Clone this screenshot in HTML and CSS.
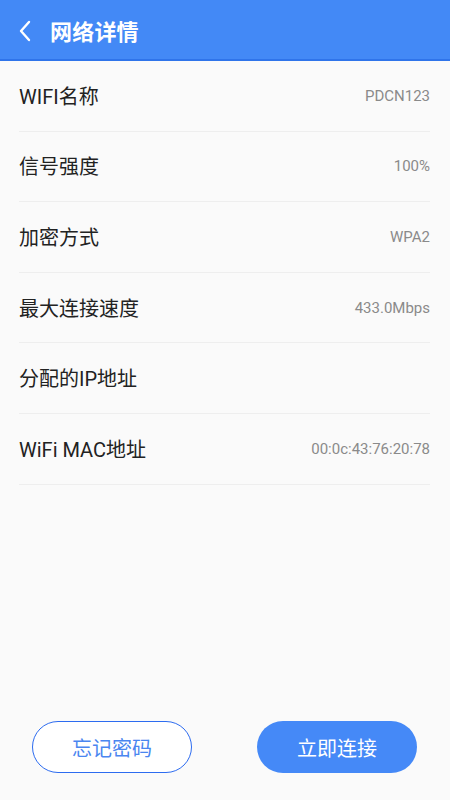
FILE: index.html
```html
<!DOCTYPE html>
<html lang="zh-CN">
<head>
    <meta charset="UTF-8">
    <title>网络详情</title>
    <link rel="stylesheet" href="styles.css">
</head>
<body>
    <div class="pagina">
        <div class="topo">
            <svg class="voltar" width="14" height="24" viewBox="0 0 14 24">
                <path d="M11 3 L3 12 L11 21" fill="none" stroke="#fff" stroke-width="2.4" stroke-linecap="round" stroke-linejoin="round"/>
            </svg>
            <h1>网络详情</h1>
        </div>

        <div class="lista">
            <div class="linha"><span class="nome">WIFI名称</span><span class="valor">PDCN123</span></div>
            <div class="linha"><span class="nome">信号强度</span><span class="valor">100%</span></div>
            <div class="linha"><span class="nome">加密方式</span><span class="valor">WPA2</span></div>
            <div class="linha"><span class="nome">最大连接速度</span><span class="valor">433.0Mbps</span></div>
            <div class="linha"><span class="nome">分配的IP地址</span><span class="valor"></span></div>
            <div class="linha"><span class="nome">WiFi MAC地址</span><span class="valor">00:0c:43:76:20:78</span></div>
        </div>

        <div class="botoes">
            <button class="btn contorno">忘记密码</button>
            <button class="btn cheio">立即连接</button>
        </div>
    </div>
</body>
</html>
```

FILE: styles.css
```css
body {
    margin: 0;
    padding: 0;
    background-color: #fafafa;
    font-family: Roboto, "Noto Sans CJK SC", sans-serif;
}
.pagina {
    height: 800px;
    display: flex;
    flex-direction: column;
}
.topo {
    height: 59px;
    background-color: #4389f6;
    border-bottom: 2px solid #2f74ea;
    display: flex;
    align-items: center;
    padding-left: 18px;
}
.voltar {
    margin-right: 18px;
    margin-top: 2px;
}
.topo h1 {
    margin: 0;
    color: #fff;
    font-size: 22px;
    font-weight: bold;
    letter-spacing: 0.2px;
}
.lista {
    padding: 0 20px 0 19px;
    flex: 1;
}
.linha {
    height: 69.6px;
    border-bottom: 1px solid #eeeeee;
    display: flex;
    align-items: center;
    justify-content: space-between;
}
.nome {
    font-size: 20px;
    color: #222;
    margin-top: -1px;
}
.valor {
    font-size: 15px;
    color: #8a8a8a;
}
.botoes {
    display: flex;
    justify-content: space-between;
    padding: 0 33px 27px 32px;
}
.btn {
    width: 160px;
    height: 52px;
    border-radius: 26px;
    font-family: inherit;
    font-size: 20px;
    cursor: pointer;
}
.contorno {
    background: #fff;
    border: 1.5px solid #2d6cf0;
    color: #4a86f0;
}
.cheio {
    background: #4589f7;
    border: none;
    color: #fff;
}
```
